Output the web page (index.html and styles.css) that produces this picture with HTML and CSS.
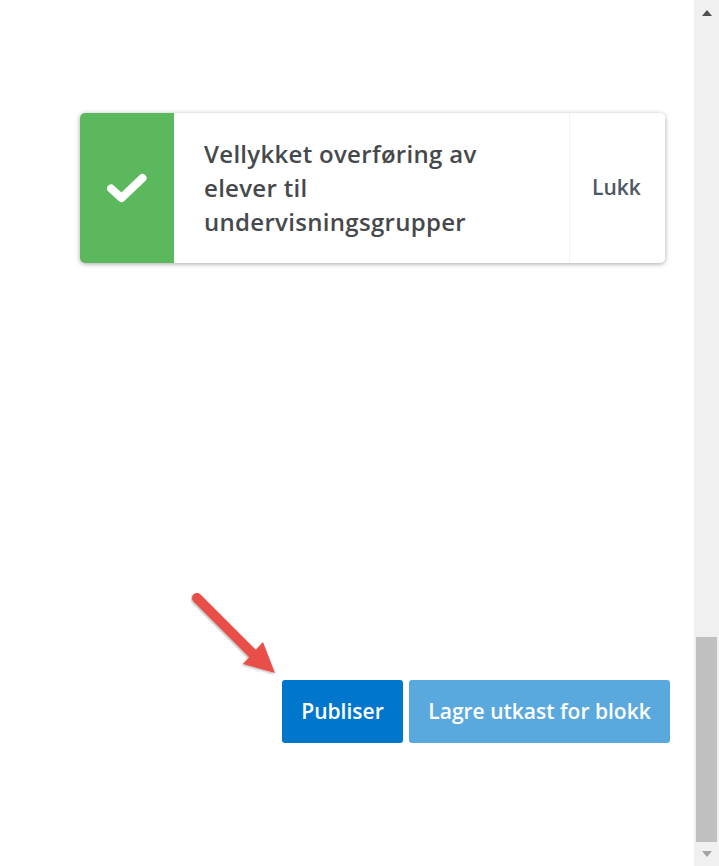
FILE: index.html
```html
<!DOCTYPE html>
<html lang="no">
<head>
<meta charset="utf-8">
<title>Vellykket overføring</title>
<link rel="stylesheet" href="styles.css">
</head>
<body>
<div class="page">
  <main class="content">
    <div class="toast">
      <div class="toast-icon">
        <svg width="40" height="30" viewBox="0 0 40 30" aria-hidden="true"><path class="check" d="M4 15.500 L14.500 25 L35.500 5"/></svg>
      </div>
      <div class="toast-text">Vellykket overføring av elever til undervisningsgrupper</div>
      <button class="toast-close">Lukk</button>
    </div>
    <div class="actions">
      <button class="btn btn-primary">Publiser</button>
      <button class="btn btn-light">Lagre utkast for blokk</button>
    </div>
    <svg class="arrow" width="100" height="100" viewBox="0 0 100 100" aria-hidden="true">
      <defs><filter id="s" x="-20%" y="-20%" width="140%" height="140%"><feDropShadow dx="-1" dy="1" stdDeviation="1.200" flood-color="#000" flood-opacity=".3"/></filter></defs>
      <g filter="url(#s)">
        <path class="arrow-shaft" d="M6 8 L62 64"/>
        <path class="arrow-head" d="M84 83 L72 52 L52 74 Z"/>
      </g>
    </svg>
  </main>
  <aside class="scrollbar">
    <div class="sb-btn"><span class="tri tri-up"></span></div>
    <div class="sb-track"><div class="sb-thumb"></div></div>
    <div class="sb-btn sb-btn-down"><span class="tri tri-down"></span></div>
  </aside>
</div>
</body>
</html>
```
FILE: styles.css
```css
* { box-sizing: border-box; }
html, body { margin: 0; height: 100%; overflow: hidden; background: #fff; }
body { font-family: "Open Sans", "Noto Sans", sans-serif; }
.page { display: flex; width: 719px; height: 866px; }
.content { position: relative; width: 694px; padding: 113px 29px 0 80px; }
.toast {
  display: flex; width: 585px; height: 150px; background: #fff; border-radius: 5px;
  box-shadow: 0 1px 5px rgba(0,0,0,.35); overflow: hidden;
}
.toast-icon { width: 94px; flex: none; background: #5cb85c; display: flex; align-items: center; justify-content: center; }
.check { fill: none; stroke: #fff; stroke-width: 8px; stroke-linecap: round; stroke-linejoin: round; }
.toast-text {
  flex: 1; padding: 24px 60px 0 30px; font-size: 24px; line-height: 34px; font-weight: 600;
  color: #46494c; letter-spacing: .3px;
}
.toast-close {
  width: 96px; flex: none; border: 0; border-left: 1px solid #f4f4f4; background: #fff;
  font: 600 21px "Open Sans", sans-serif; color: #4c5863; padding: 0 2px 2px 0;
}
.actions { display: flex; justify-content: flex-end; gap: 6px; margin: 417px -5px 0 0; }
.btn {
  height: 63px; border: 0; border-radius: 3px; color: #fff; font: 600 21px "Open Sans", sans-serif; padding: 0 0 1px;
}
.btn-primary { width: 121px; background: #0077cc; }
.btn-light { width: 261px; background: #5aa9de; }
.arrow { position: absolute; left: 191px; top: 590px; }
.arrow-shaft { fill: none; stroke: #e8504a; stroke-width: 10px; stroke-linecap: round; }
.arrow-head { fill: #e8504a; }
.scrollbar { width: 25px; background: #f0f0f0; display: flex; flex-direction: column; }
.sb-btn { height: 26px; display: flex; align-items: center; justify-content: center; }
.sb-btn-down { height: 24px; }
.sb-track { flex: 1; padding: 611px 2px 0 2px; }
.sb-thumb { height: 205px; background: #c0c0c0; }
.tri { width: 0; height: 0; border-left: 5px solid transparent; border-right: 5px solid transparent; }
.tri-up { border-bottom: 6px solid #505050; }
.tri-down { border-top: 6px solid #a3a3a3; }
```
